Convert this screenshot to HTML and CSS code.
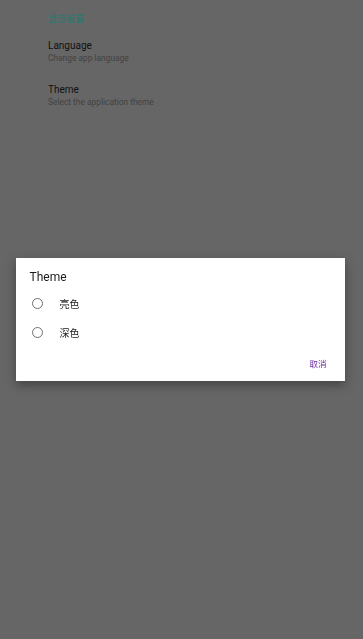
FILE: index.html
```html
<!DOCTYPE html>
<html>
<head>
<meta charset="utf-8">
<link rel="stylesheet" href="styles.css">
</head>
<body>
<div class="settings">
  <div class="section-title">显示设置</div>
  <div class="pref">
    <div class="pref-title">Language</div>
    <div class="pref-summary">Change app language</div>
  </div>
  <div class="pref">
    <div class="pref-title">Theme</div>
    <div class="pref-summary">Select the application theme</div>
  </div>
</div>
<div class="scrim">
  <div class="dialog">
    <div class="dialog-title">Theme</div>
    <div class="option"><span class="radio"></span><span class="option-label">亮色</span></div>
    <div class="option"><span class="radio"></span><span class="option-label">深色</span></div>
    <div class="actions"><span class="btn">取消</span></div>
  </div>
</div>
</body>
</html>
```
FILE: styles.css
```css
html, body {
  margin: 0;
  padding: 0;
  background: #666666;
  font-family: Roboto, "Noto Sans CJK SC", sans-serif;
  width: 363px;
  height: 639px;
  overflow: hidden;
}
.settings {
  padding: 13px 0 0 48px;
}
.section-title {
  color: #217d72;
  font-size: 9px;
  line-height: 12px;
  margin-bottom: 15px;
}
.pref {
  margin-bottom: 20px;
}
.pref-title {
  color: #111;
  font-size: 10px;
  line-height: 12px;
}
.pref-summary {
  color: #424242;
  font-size: 8.4px;
  line-height: 12px;
}
.scrim {
  position: fixed;
  inset: 0;
  display: flex;
  align-items: center;
  justify-content: center;
  padding-bottom: 1px;
}
.dialog {
  width: 329px;
  height: 123px;
  box-sizing: border-box;
  background: #fff;
  margin-left: -3px;
  padding: 12px 16px 0 14px;
  box-shadow: 0 4px 10px rgba(0,0,0,0.35);
  display: flex;
  flex-direction: column;
}
.dialog-title {
  font-size: 12px;
  line-height: 14px;
  color: #1a1a1a;
  margin-bottom: 5px;
}
.option {
  display: flex;
  align-items: center;
  height: 29px;
}
.radio {
  width: 9px;
  height: 9px;
  border: 1.5px solid #6f6f6f;
  border-radius: 50%;
  margin-left: 2px;
}
.option-label {
  margin-left: 17px;
  font-size: 10px;
  color: #222;
}
.actions {
  display: flex;
  justify-content: flex-end;
  margin-top: 10px;
  padding-right: 2px;
}
.btn {
  color: #6a2a9e;
  font-size: 8.5px;
}
```
